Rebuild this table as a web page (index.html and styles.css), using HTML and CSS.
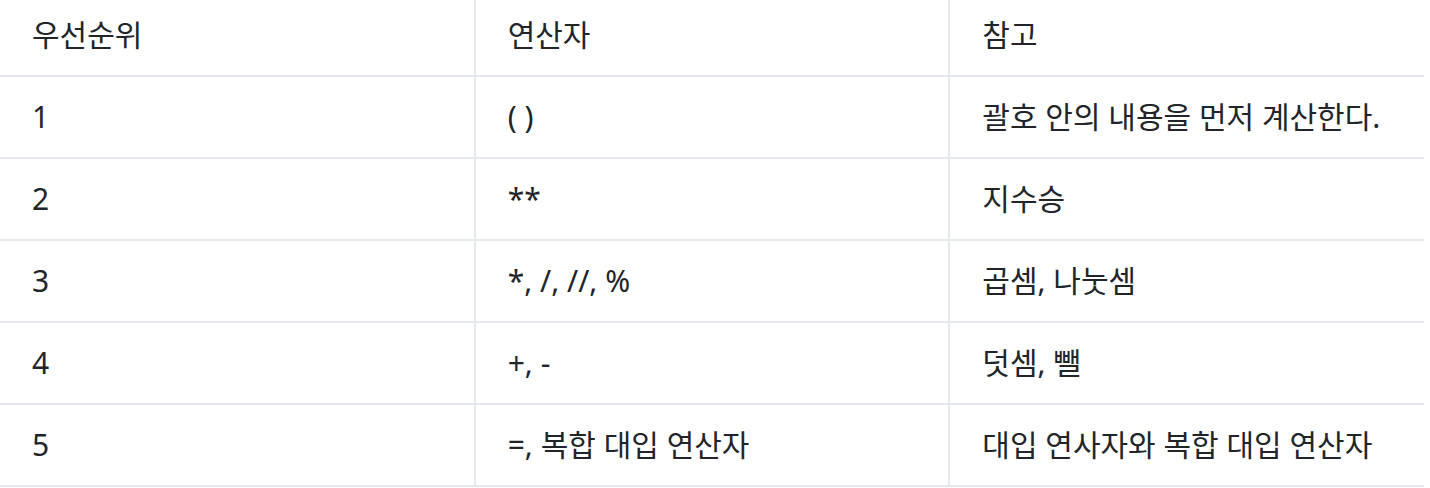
FILE: index.html
```html
<!DOCTYPE html>
<html lang="ko">
<head>
<meta charset="utf-8">
<title>연산자 우선순위</title>
<link rel="stylesheet" href="styles.css">
</head>
<body>
<table class="prec">
  <colgroup>
    <col class="col">
    <col class="col">
    <col class="col">
  </colgroup>
  <thead>
    <tr>
      <th>우선순위</th>
      <th>연산자</th>
      <th>참고</th>
    </tr>
  </thead>
  <tbody>
    <tr><td>1</td><td>( )</td><td>괄호 안의 내용을 먼저 계산한다.</td></tr>
    <tr><td>2</td><td>**</td><td>지수승</td></tr>
    <tr><td>3</td><td>*, /, //, %</td><td>곱셈, 나눗셈</td></tr>
    <tr><td>4</td><td>+, -</td><td>덧셈, 뺄</td></tr>
    <tr><td>5</td><td>=, 복합 대입 연산자</td><td>대입 연사자와 복합 대입 연산자</td></tr>
  </tbody>
</table>
</body>
</html>
```
FILE: styles.css
```css
html, body {
  margin: 0;
  padding: 0;
  background: #ffffff;
}

body {
  font-family: "Noto Sans", "Noto Sans CJK KR", sans-serif;
  font-size: 30px;
  color: #212529;
}

.prec {
  width: 1424px;
  table-layout: fixed;
  border-collapse: collapse;
}

.prec .col {
  width: 33.333%;
}

.prec th,
.prec td {
  text-align: left;
  font-weight: 400;
  line-height: 40px;
  padding: 20px 32px;
  border-bottom: 2px solid #e5e8ec;
  border-left: 2px solid #e5e8ec;
  white-space: nowrap;
  vertical-align: middle;
}

.prec th {
  padding-top: 15px;
  padding-bottom: 20px;
}

.prec th:first-child,
.prec td:first-child {
  border-left: none;
}
```
